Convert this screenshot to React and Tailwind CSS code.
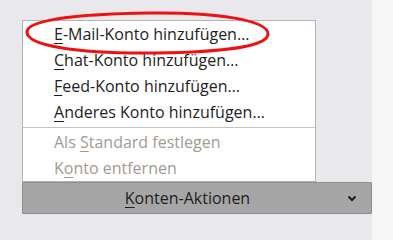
import React from 'react';

const U = ({ children }) => <span className="underline underline-offset-[3px] decoration-1">{children}</span>;

const items = [
  { pre: '', key: 'E', post: '-Mail-Konto hinzufügen…' },
  { pre: '', key: 'C', post: 'hat-Konto hinzufügen…' },
  { pre: '', key: 'F', post: 'eed-Konto hinzufügen…' },
  { pre: '', key: 'A', post: 'nderes Konto hinzufügen…' },
];

const disabled = [
  { pre: 'Als ', key: 'S', post: 'tandard festlegen' },
  { pre: 'K', key: 'o', post: 'nto entfernen' },
];

export default function App() {
  return (
    <div className="w-[393px] h-[240px] flex bg-[#e9e8ed] overflow-hidden text-[16px]" style={{ fontFamily: '"Open Sans", sans-serif' }}>
      <div className="w-[372px] pt-[20px] pl-[22px] flex flex-col relative">
        <div className="w-[294px] border border-[#b4b4b4] bg-white flex flex-col">
          {items.map((it, i) => (
            <div key={i} className="h-[26px] pl-[31px] flex items-center text-[#1e1e1e]">
              <span className="whitespace-pre">{it.pre}<U>{it.key}</U>{it.post}</span>
            </div>
          ))}
          <div className="h-[4px] flex items-center"><div className="h-px w-full bg-[#c4c4c4]" /></div>
          {disabled.map((it, i) => (
            <div key={i} className="h-[26px] pl-[31px] flex items-center text-[#a39a92]">
              <span className="whitespace-pre">{it.pre}<U>{it.key}</U>{it.post}</span>
            </div>
          ))}
        </div>
        <div className="w-[350px] h-[32px] border border-[#8e8e8e] bg-[#a6a6a6] rounded-[1px] flex items-center text-[#1e1e1e]">
          <div className="flex-1 text-center pl-[6px]"><U>K</U>onten-Aktionen</div>
          <svg width="12" height="12" viewBox="0 0 12 12" className="mr-[13px]">
            <path d="M2.5 4.5 L6 8 L9.5 4.5" fill="none" stroke="#1e1e1e" strokeWidth="2" />
          </svg>
        </div>
        <svg className="absolute left-[23px] top-[10px]" width="250" height="46" viewBox="0 0 250 46">
          <path d="M126 3 C192 2 245 10 245 24 C245 38 186 43 120 43 C55 43 4 36 4 22 C4 9 60 4 126 3 Z" fill="none" stroke="#ee1111" strokeWidth="3" />
        </svg>
      </div>
      <div className="flex-1 bg-[#f6f6f6]" />
    </div>
  );
}
